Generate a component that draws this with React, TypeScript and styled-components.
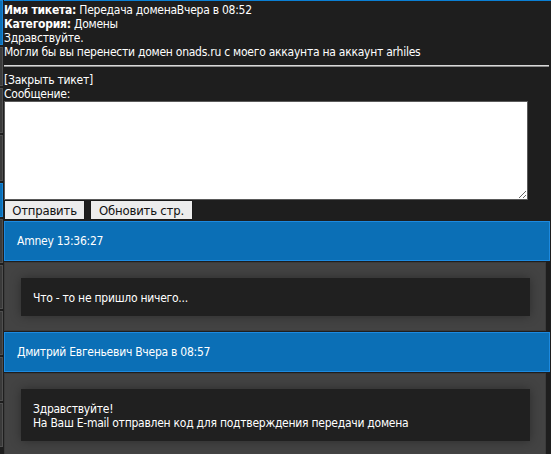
import React from "react";
import styled, { createGlobalStyle } from "styled-components";

const GlobalStyle = createGlobalStyle`
    html, body {
        margin: 0;
        padding: 0;
        background: #1e1e1e;
    }
    body {
        font-family: "DejaVu Sans Condensed", "DejaVu Sans", sans-serif;
        font-size: 12px;
        line-height: 14px;
        letter-spacing: -0.25px;
        color: #ffffff;
        overflow: hidden;
    }
`;

const sideBlocks = [
    { height: 45, blue: true },
    { height: 39, blue: false },
    { height: 45, blue: false },
    { height: 46, blue: false },
    { height: 34, blue: true },
    { height: 44, blue: false },
    { height: 44, blue: false },
    { height: 44, blue: false },
    { height: 44, blue: false },
    { height: 44, blue: false },
];

const comments = [
    { author: "Amney 13:36:27", lines: ["Что - то не пришло ничего..."] },
    {
        author: "Дмитрий Евгеньевич Вчера в 08:57",
        lines: ["Здравствуйте!", "На Ваш E-mail отправлен код для подтверждения передачи домена"],
    },
];

export default function App() {
    return (
        <>
            <GlobalStyle />
            <Page>
                <Sidebar>
                    {sideBlocks.map((b, i) => (
                        <SideBlock key={i} height={b.height} blue={b.blue} />
                    ))}
                </Sidebar>
                <Main>
                    <TicketInfo>
                        <div>
                            <b>Имя тикета:</b> Передача доменаВчера в 08:52
                        </div>
                        <div>
                            <b>Категория:</b> Домены
                        </div>
                        <div>Здравствуйте.</div>
                        <div>Могли бы вы перенести домен onads.ru с моего аккаунта на аккаунт arhiles</div>
                    </TicketInfo>
                    <Divider />
                    <CloseLink href="#">[Закрыть тикет]</CloseLink>
                    <div>Сообщение:</div>
                    <MessageArea />
                    <ButtonRow>
                        <FormButton style={{ width: 81 }}>Отправить</FormButton>
                        <FormButton style={{ width: 103 }}>Обновить стр.</FormButton>
                    </ButtonRow>
                    <CommentList>
                        {comments.map((c, i) => (
                            <Comment key={i}>
                                <CommentHeader>{c.author}</CommentHeader>
                                <CommentBody>
                                    <CommentText>
                                        {c.lines.map((l, j) => (
                                            <div key={j}>{l}</div>
                                        ))}
                                    </CommentText>
                                </CommentBody>
                            </Comment>
                        ))}
                    </CommentList>
                </Main>
            </Page>
        </>
    );
}

const Page = styled.div`
    display: flex;
    height: 454px;
    overflow: hidden;
`;

const Sidebar = styled.div`
    width: 3px;
    display: flex;
    flex-direction: column;
    gap: 2px;
    margin-right: 1px;
`;

const SideBlock = styled.div<{ height: number; blue: boolean }>`
    flex: 0 0 ${p => p.height}px;
    background: ${p => (p.blue ? "#0b6fb6" : "#3a3a3a")};
    border: 1px solid ${p => (p.blue ? "#1a86d6" : "#505050")};
    border-left: none;
    box-sizing: border-box;
`;

const Main = styled.div`
    flex: 1;
    border-top: 1px solid #0a7fd4;
    padding-top: 2px;
    min-width: 0;
`;

const TicketInfo = styled.div`
    b {
        font-weight: bold;
    }
`;

const Divider = styled.div`
    margin: 6px 2px 6px 0;
    height: 2px;
    background: linear-gradient(#d9d9d9 0 1px, #8a8a8a 1px 2px);
`;

const CloseLink = styled.a`
    display: block;
    color: #ffffff;
    text-decoration: none;
`;

const MessageArea = styled.textarea`
    display: block;
    box-sizing: border-box;
    width: 524px;
    height: 99px;
    margin: 0;
    border: 1px solid #5a5a5a;
    background: #ffffff;
`;

const ButtonRow = styled.div`
    display: flex;
    gap: 5px;
    margin-bottom: 1px;
`;

const FormButton = styled.button`
    box-sizing: border-box;
    height: 20px;
    padding: 0;
    background: #ececec;
    border: 1px solid #1a1a1a;
    color: #111111;
    font-family: inherit;
    font-size: 13px;
    letter-spacing: -0.2px;
`;

const CommentList = styled.div`
    display: flex;
    flex-direction: column;
    gap: 1px;
`;

const Comment = styled.div`
    display: flex;
    flex-direction: column;
    gap: 1px;
`;

const CommentHeader = styled.div`
    box-sizing: border-box;
    height: 40px;
    display: flex;
    align-items: center;
    padding-left: 12px;
    background: #0b6fb6;
    border: 1px solid #1d8ae0;
    margin-right: 1px;
`;

const CommentBody = styled.div`
    background: #434343;
    padding: 15px 15px 14px 16px;
    margin-right: 5px;
    border: 1px solid #3b3b3b;
`;

const CommentText = styled.div`
    background: #202020;
    padding: 13px 12px 11px 12px;
    box-shadow: 0 0 10px rgba(0, 0, 0, 0.35);
`;
